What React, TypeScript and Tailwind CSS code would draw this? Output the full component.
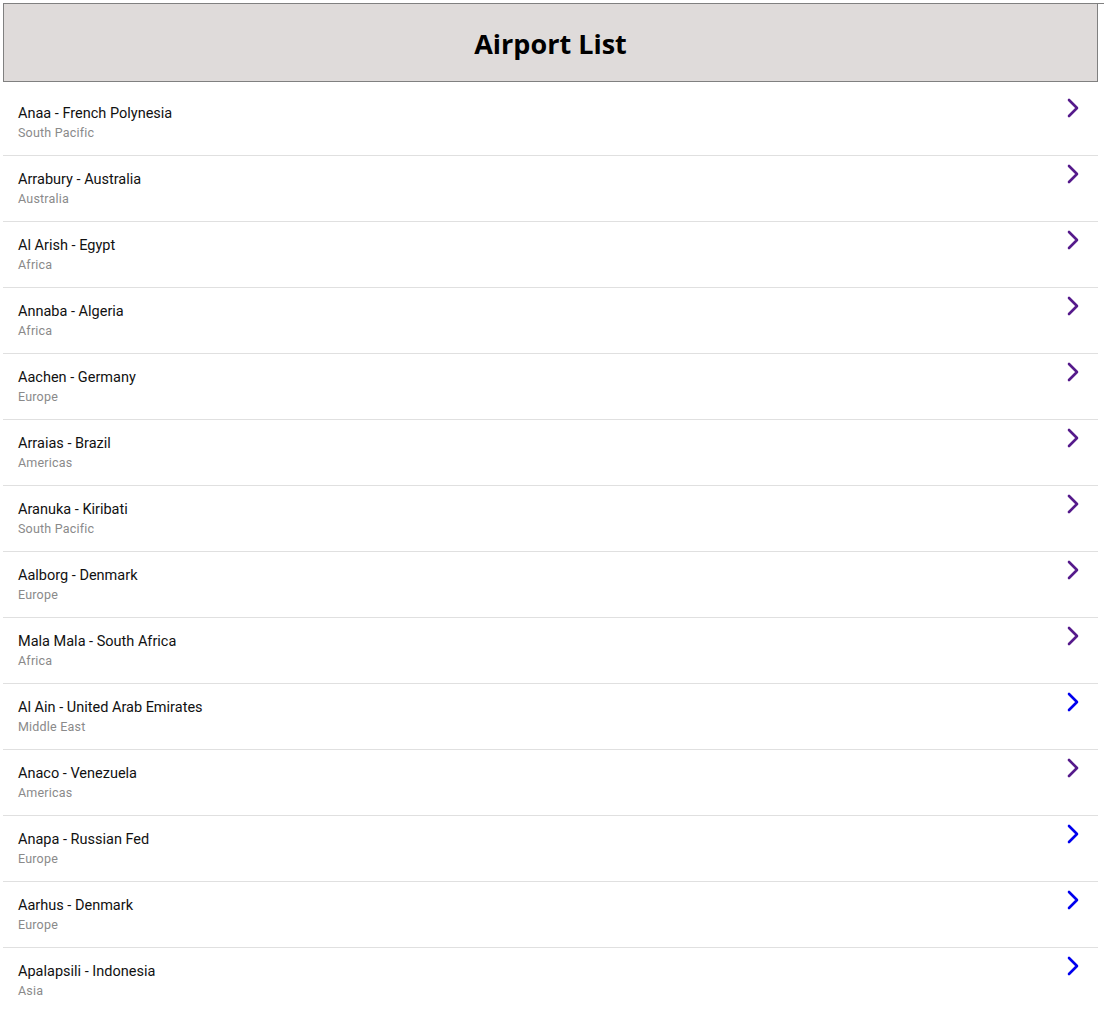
const AIRPORTS: { name: string; region: string; visited: boolean }[] = [
  { name: "Anaa - French Polynesia", region: "South Pacific", visited: true },
  { name: "Arrabury - Australia", region: "Australia", visited: true },
  { name: "Al Arish - Egypt", region: "Africa", visited: true },
  { name: "Annaba - Algeria", region: "Africa", visited: true },
  { name: "Aachen - Germany", region: "Europe", visited: true },
  { name: "Arraias - Brazil", region: "Americas", visited: true },
  { name: "Aranuka - Kiribati", region: "South Pacific", visited: true },
  { name: "Aalborg - Denmark", region: "Europe", visited: true },
  { name: "Mala Mala - South Africa", region: "Africa", visited: true },
  { name: "Al Ain - United Arab Emirates", region: "Middle East", visited: false },
  { name: "Anaco - Venezuela", region: "Americas", visited: true },
  { name: "Anapa - Russian Fed", region: "Europe", visited: false },
  { name: "Aarhus - Denmark", region: "Europe", visited: false },
  { name: "Apalapsili - Indonesia", region: "Asia", visited: false },
];

function Chevron({ visited }: { visited: boolean }) {
  return (
    <svg
      width="14"
      height="20"
      viewBox="0 0 14 20"
      fill="none"
      className={visited ? "text-[#551a8b]" : "text-[#0000ee]"}
    >
      <path d="M3 2 L11 10 L3 18" stroke="currentColor" strokeWidth="2.6" strokeLinecap="round" strokeLinejoin="round" />
    </svg>
  );
}

export default function App() {
  return (
    <div className="min-h-screen bg-white pl-[3px] pt-[3px] font-['Roboto',sans-serif]">
      <div className="border-t border-[#808080]">
        <header className="mr-[6px] flex h-[78px] items-center justify-center border-x border-b border-[#808080] bg-[#dfdbda] pt-[4px]">
          <h1 className="font-['Open_Sans',sans-serif] text-[27px] font-bold text-black">Airport List</h1>
        </header>
      </div>

      <ul className="mr-[6px] mt-[8px]">
        {AIRPORTS.map((a) => (
          <li key={a.name} className="flex items-start justify-between border-b border-[#e0e0e0] pl-[15px] pr-[18px]">
            <div className="pb-[14px] pt-[14px]">
              <div className="text-[14.5px] leading-[20px] text-[#111]">{a.name}</div>
              <div className="mt-[1px] text-[12.5px] leading-[16px] tracking-[0.2px] text-[#8a8a8a]">{a.region}</div>
            </div>
            <a href="#" className="pt-[8px]">
              <Chevron visited={a.visited} />
            </a>
          </li>
        ))}
      </ul>
    </div>
  );
}
